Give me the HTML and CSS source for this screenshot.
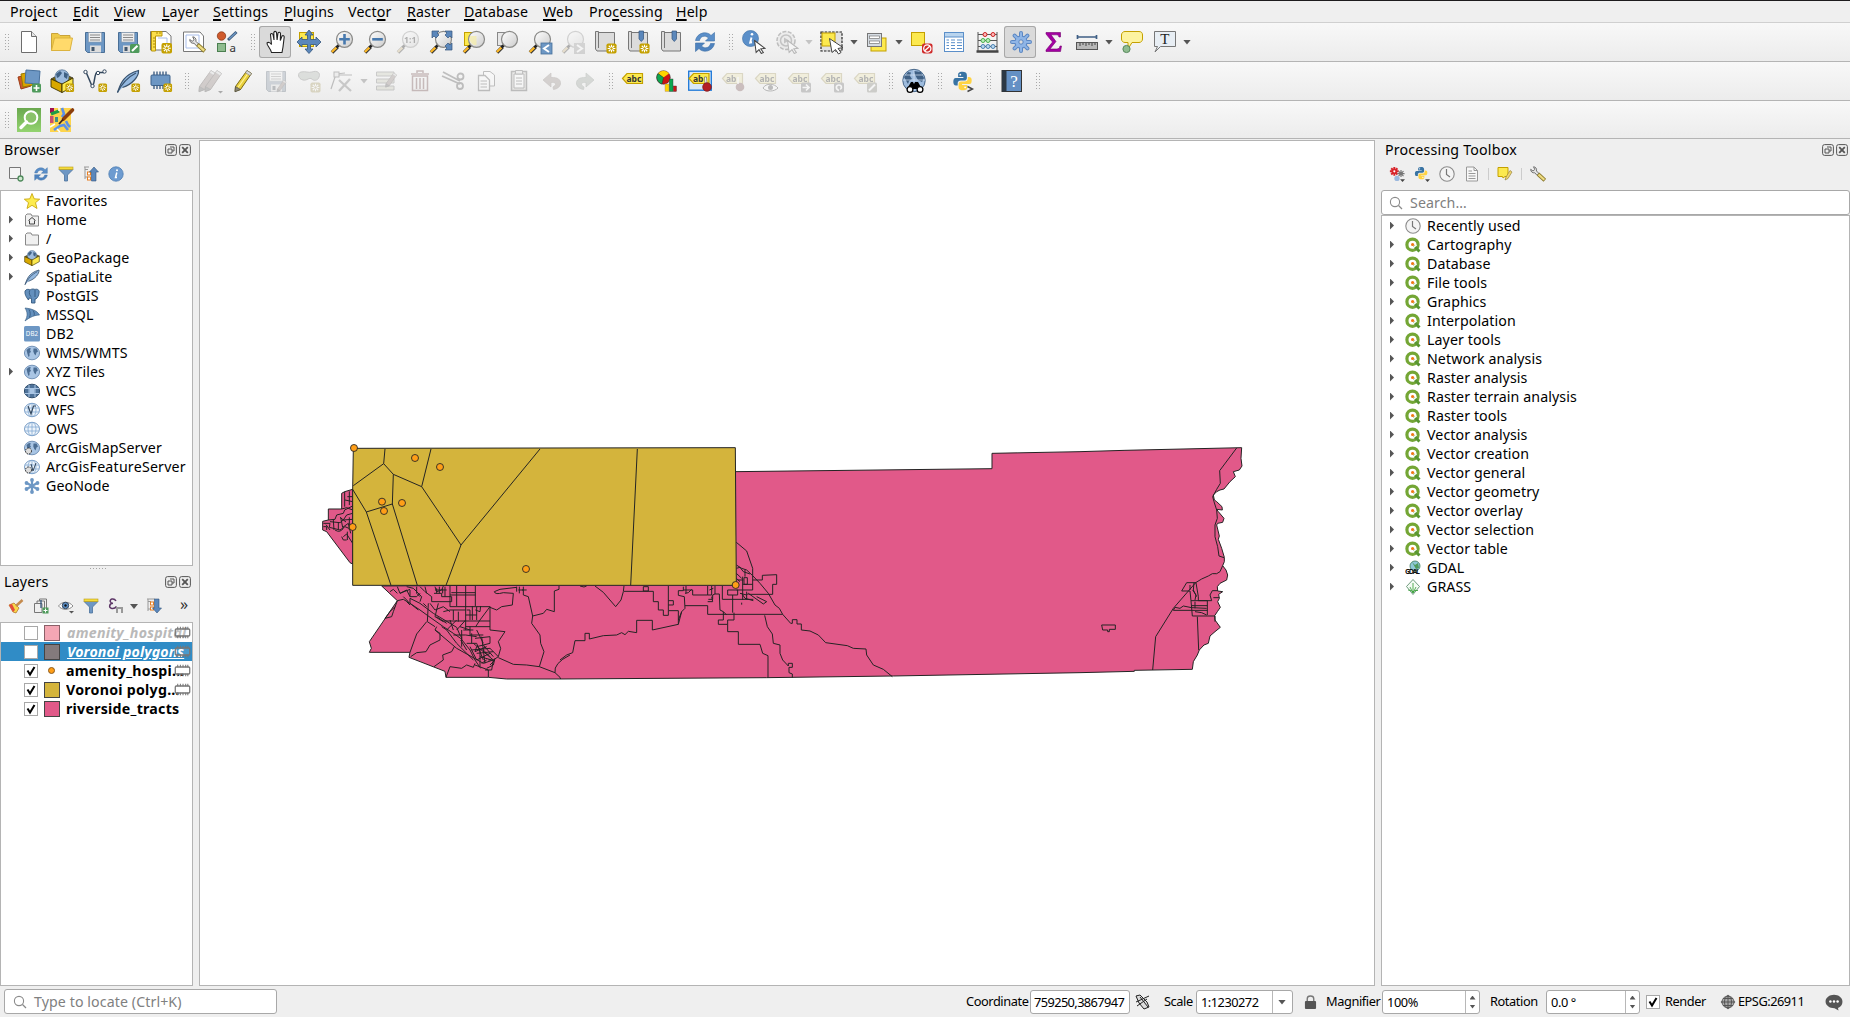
FILE: index.html
```html
<!DOCTYPE html>
<html lang="en">
<head>
<meta charset="utf-8">
<title>QGIS</title>
<link rel="stylesheet" href="styles.css">
</head>
<body>
<svg class="defs" width="0" height="0">
  <defs>
    <linearGradient id="lens" x1="0" y1="0" x2="1" y2="1"><stop offset="0" stop-color="#fff"/><stop offset="1" stop-color="#ccc"/></linearGradient>
    <linearGradient id="greenbox" x1="0" y1="0" x2="0" y2="1"><stop offset="0" stop-color="#6aa84f"/><stop offset="1" stop-color="#93d36f"/></linearGradient>
    <symbol id="new" viewBox="0 0 12 12"><rect x=".5" y=".5" width="11" height="11" rx="2" fill="#c4a000"/><path d="M6 1.8V10.2M1.8 6H10.2M3 3L9 9M9 3L3 9" stroke="#fff" stroke-width="1.2"/><circle cx="6" cy="6" r="1.3" fill="#c4a000"/></symbol>
    <symbol id="glass" viewBox="0 0 24 24"><path d="M2 22.500L7.500 17" stroke="#333" stroke-width="3.600"/><path d="M1.800 22L6.500 17.500" stroke="#fcb827" stroke-width="2.400"/><path d="M6.500 17.500L9.500 14.500" stroke="#222" stroke-width="2.600"/><circle cx="14.500" cy="9.300" r="8" fill="url(#lens)" stroke="#8a8a88" stroke-width="1.200"/></symbol>
    <symbol id="floppy" viewBox="0 0 24 24"><path d="M2.500 2.500H21.500V22.500H4.500L2.500 20.500Z" fill="#6d97c4" stroke="#4a6f96" stroke-width="1"/><rect x="5.500" y="2.500" width="13" height="9.500" fill="#eee" stroke="#8a9aac" stroke-width=".6"/><path d="M7 5H17M7 7.500H17M7 10H17" stroke="#888" stroke-width="1"/><rect x="7" y="15.500" width="11" height="7" fill="#ddd"/><rect x="8.500" y="17" width="3" height="4" fill="#41566c"/></symbol>
    <symbol id="reload" viewBox="0 0 24 24"><path d="M2.500 10.500C4 2.500 14 .5 18 5.500L21.500 2.500V11H12.500L15.500 8C12 4.500 7 6.500 6.500 10.500Z" fill="#5b8fc9" stroke="#3c6ea5" stroke-width=".6"/><path d="M21.500 13.500C20 21.500 10 23.500 6 18.500L2.500 21.500V13H11.500L8.500 16C12 19.500 17 17.500 17.500 13.500Z" fill="#4f83bf" stroke="#3c6ea5" stroke-width=".6"/></symbol>
    <symbol id="globe" viewBox="0 0 16 16"><ellipse cx="8" cy="8" rx="7.600" ry="6.800" fill="#a9c5e4" stroke="#5c7fa8" stroke-width=".8"/><path d="M2.500 5L5 3 7 3.500 6 5 7 7 5.500 8 5.500 11 4.500 12 3.500 9Z M9.500 3.500L12.500 3.500 14 6.500 12.500 7.500 11.500 10.500 10.300 9 9.300 6.500Z" fill="#4b6d93"/></symbol>
    <symbol id="grid" viewBox="0 0 16 16"><ellipse cx="8" cy="8" rx="7.500" ry="6.700" fill="#edf4fb" stroke="#6c93c0" stroke-width=".9"/><path d="M1 6H15M1 10H15M8 1.300V14.700" stroke="#83a9d3" stroke-width=".8"/><ellipse cx="8" cy="8" rx="4" ry="6.700" fill="none" stroke="#83a9d3" stroke-width=".8"/></symbol>
    <symbol id="package" viewBox="0 0 24 24"><path d="M1 10L12 4 23 9 12 15Z" fill="#7a6500" stroke="#333" stroke-width=".8"/><circle cx="12" cy="7.800" r="7" fill="#9dbbdd" stroke="#49688a" stroke-width=".7"/><path d="M6 5L10 2 12 4 9 8 7 9ZM14 3L18 5 17 10 14 8Z" fill="#3f6084"/><path d="M1 10L12 15V23.500L1 18Z" fill="#d8a800" stroke="#3c3200" stroke-width=".9"/><path d="M23 9L12 15V23.500L23 17.500Z" fill="#fce94f" stroke="#3c3200" stroke-width=".9"/></symbol>
    <symbol id="feather" viewBox="0 0 24 24"><path d="M1.500 23.500C4 17 6 6 22.500 1.500 23 7 17 15 6.500 18.500" fill="#93b8e0" stroke="#39536f" stroke-width="1.200"/><path d="M1.500 23.500C6 14 12 8 20 4" fill="none" stroke="#39536f" stroke-width="1.200"/></symbol>
    <symbol id="python" viewBox="0 0 24 24"><path d="M12 1.500C8 1.500 7 3 7 5V7.500H13V8.500H4.500C2 8.500 1.500 11 1.500 13S2.500 17 4.500 17H6.500V14.500C6.500 12.500 8 11.500 10 11.500H14C16 11.500 17 10 17 8.500V5C17 2.500 15 1.500 12 1.500Z" fill="#3873a3"/><circle cx="9.500" cy="4.800" r="1" fill="#fff"/><path d="M12.500 22.500C16.500 22.500 17.500 21 17.500 19V16.500H11.500V15.500H20C22 15.500 22.500 13 22.500 11S21.500 7.500 19.500 7.500H18V9.500C18 11.500 16.500 12.500 14.500 12.500H10.500C8.500 12.500 7.500 14 7.500 15.500V19C7.500 21.500 9.500 22.500 12.500 22.500Z" fill="#ffd343"/><circle cx="15" cy="19.200" r="1" fill="#fff"/></symbol>
    <symbol id="tag" viewBox="0 0 24 24"><path d="M1.500 9.500L6 4.500H21.500V14.500H6Z" fill="#fce94f" stroke="#c4a000" stroke-width="1.200"/></symbol>
    <symbol id="pencil" viewBox="0 0 24 24"><path d="M4.500 17.500L16 1.500 20.500 4.500 9.500 20.500 4 22.500Z" fill="#e9d03b" stroke="#7b6a16" stroke-width="1"/><path d="M7 18.500L18 3" stroke="#fff29a" stroke-width="1.200"/><path d="M16 1.500L20.500 4.500 19 6.700 14.500 3.700Z" fill="#d9d9d9" stroke="#777" stroke-width=".6"/><path d="M4.500 17.500L9.500 20.500 4 22.800Z" fill="#8b8775" stroke="#444" stroke-width=".6"/></symbol>
    <symbol id="dullpencil" viewBox="0 0 24 24"><path d="M4.500 17.500L16 1.500 20.500 4.500 9.500 20.500 4 22.500Z" fill="#a87f74" stroke="#6b5048" stroke-width="1"/><path d="M16 1.500L20.500 4.500 19 6.700 14.500 3.700Z" fill="#d9d9d9" stroke="#777" stroke-width=".6"/><path d="M4.500 17.500L9.500 20.500 4 22.800Z" fill="#666" stroke="#444" stroke-width=".6"/></symbol>
    <symbol id="cursor" viewBox="0 0 12 14"><path d="M1 1L11 8.500 7 9 9.500 12.500 7.500 13.500 5.300 9.800 2.500 12.500Z" fill="#fff" stroke="#444" stroke-width="1"/></symbol>
    <symbol id="q" viewBox="0 0 16 16"><circle cx="7.500" cy="7.700" r="5.600" fill="#fff" stroke="#74a635" stroke-width="3.200"/><path d="M9 9L14.500 14.500" stroke="#589632" stroke-width="3"/><path d="M8 11L11.500 8" stroke="#fff" stroke-width="1.300"/><circle cx="7.600" cy="7.500" r="1.600" fill="#ee7913"/></symbol>
    <symbol id="clock" viewBox="0 0 16 16"><circle cx="8" cy="8" r="7.200" fill="#f4f4f4" stroke="#8c8c8c" stroke-width="1.100"/><path d="M7.500 3V8.500L11 11" fill="none" stroke="#777" stroke-width="1.200"/></symbol>
    <symbol id="funnel" viewBox="0 0 16 16"><path d="M1 3.500L6.500 9V15H9.500V9L15 3.500Z" fill="#6e97c4" stroke="#49719d" stroke-width=".8"/><rect x="1" y="1" width="14" height="2.600" fill="#f5dc3c" stroke="#b89b15" stroke-width=".6"/></symbol>
    <symbol id="float" viewBox="0 0 12 12"><rect x=".6" y=".6" width="10.800" height="10.800" rx="2" fill="#eee" stroke="#555"/><path d="M5 3H9V7H7M3 5H7V9H3Z" fill="none" stroke="#555"/></symbol>
    <symbol id="close" viewBox="0 0 12 12"><rect x=".6" y=".6" width="10.800" height="10.800" rx="2" fill="#eee" stroke="#555"/><path d="M3.200 3.200L8.800 8.800M8.800 3.200L3.200 8.800" stroke="#555" stroke-width="1.800"/></symbol>
    <symbol id="mem" viewBox="0 0 16 12"><rect x="1.200" y="2.700" width="13.600" height="6.600" rx="1" fill="#fff" fill-opacity=".12" stroke="#777" stroke-width="1.200"/><path d="M3.500 .5V3M6 .5V3M8.500 .5V3M11 .5V3M13 .5V3M3.500 9V11.500M6 9V11.500M8.500 9V11.500M11 9V11.500M13 9V11.500" stroke="#777" stroke-width="1"/></symbol>
    <symbol id="find" viewBox="0 0 14 14"><circle cx="6" cy="6" r="4.600" fill="none" stroke="#8a8a8a" stroke-width="1.100"/><path d="M9.500 9.500L13 13" stroke="#8a8a8a" stroke-width="1.200"/></symbol>
    <symbol id="folder" viewBox="0 0 16 16"><path d="M1.500 3.500L3 2H7L8 4H14.500V14H1.500Z" fill="#f0f0f0" stroke="#888"/></symbol>
    <symbol id="wrench" viewBox="0 0 16 16"><path d="M3.500 .8C5.500 .8 7 2.500 6.500 5L9 7.500 7 9.300 4.800 6.800C2.500 7.300 .5 5.500 .7 3.300L3 5 4.800 3.500Z" fill="#e4e4e4" stroke="#666" stroke-width=".9"/><path d="M8 8L14.800 14.300" stroke="#8b7a2c" stroke-width="3.800"/><path d="M8.500 8.500L14.300 13.800" stroke="#eedc82" stroke-width="2.200"/></symbol>
  </defs>
</svg>

<nav class="menubar">
  <span class="m1">Pro<u>j</u>ect</span><span class="m2"><u>E</u>dit</span><span class="m3"><u>V</u>iew</span><span class="m4"><u>L</u>ayer</span><span class="m5"><u>S</u>ettings</span><span class="m6"><u>P</u>lugins</span><span class="m7">Vect<u>o</u>r</span><span class="m8"><u>R</u>aster</span><span class="m9"><u>D</u>atabase</span><span class="m10"><u>W</u>eb</span><span class="m11">Pro<u>c</u>essing</span><span class="m12"><u>H</u>elp</span>
</nav>

<div class="toolbar">
  <i class="grip first"></i>
  <b class="tool"><svg viewBox="0 0 24 24"><path d="M4.500 1.500H14.500L19.500 6.500V22.500H4.500Z" fill="#fff" stroke="#6d6d6d"/><path d="M14.500 1.500V6.500H19.500" fill="#e4e4e4" stroke="#6d6d6d"/></svg></b>
  <b class="tool"><svg viewBox="0 0 24 24"><path d="M1.500 20.500V3.500H8L10 5.500H20V8" fill="#eec947" stroke="#c9a33a"/><path d="M1.500 20.500L4.500 8H22.500L20 20.500Z" fill="#ffda6b" stroke="#dcb33e"/></svg></b>
  <b class="tool"><svg><use href="#floppy"/></svg></b>
  <b class="tool"><svg viewBox="0 0 24 24"><use href="#floppy"/><rect x="14" y="14" width="9.500" height="9" rx="1.500" fill="#4e9a5b"/><path d="M16 21L21.500 15.800" stroke="#fff" stroke-width="2"/></svg></b>
  <b class="tool"><svg viewBox="0 0 24 24"><path d="M1.500 1.500H17L22 6V20H1.500Z" fill="#fff" stroke="#777"/><path d="M9 8H18V16" fill="none" stroke="#a8bdea"/><path d="M2.500 1.500H13V6H6.500V21H2.500Z" fill="#fcdf4a" stroke="#b8960c"/><path d="M4 8H6M4 11H6M4 14H6M4 17H6M8 2V4M11 2V4" stroke="#a88a10"/><use href="#new" x="12" y="12.500" width="11.500" height="11.500"/></svg></b>
  <b class="tool"><svg viewBox="0 0 24 24"><path d="M1.500 2H18L21.500 6V21.500H1.500Z" fill="#fff" stroke="#777"/><path d="M4 5H17V18H4Z" fill="none" stroke="#a8bdea"/><use href="#wrench" x="7" y="6" width="17" height="17"/></svg></b>
  <b class="tool"><svg viewBox="0 0 24 24"><circle cx="6.500" cy="6" r="4.200" fill="#cf5a2c" stroke="#8e3a19" stroke-width=".8"/><path d="M13 10L21.500 2" stroke="#3a5878" stroke-width="3"/><path d="M14 9L21 2.500" stroke="#6d97c4" stroke-width="1.400"/><rect x="2.500" y="13.500" width="8" height="8" fill="#8fbc8f" stroke="#4b7f50"/><text x="14.500" y="22" font-family="Noto Sans" font-weight="normal" font-size="11.500" fill="#333">a</text></svg></b>
  <i class="grip"></i>
  <b class="tool on"><svg viewBox="0 0 24 24"><path d="M7.500 22.500C6.500 18 2.500 15 3 13 4.500 11.500 6.500 13 7.500 14.500L6.500 4.500C7 3 8.500 3.200 9 4.500L10 10 9.800 2.500C10.500 1 12 1 12.500 2.500L13.100 10 14 3C14.800 1.800 16.200 2.200 16.500 3.500L16.300 10.500 18 6C19 5 20.300 5.700 20.200 7L19 17 18 22.500Z" fill="#fff" stroke="#222" stroke-width="1.100"/></svg></b>
  <b class="tool"><svg viewBox="0 0 24 24"><rect x="2.500" y="2.500" width="14" height="14" fill="#fce94f" stroke="#c4a000"/><path d="M12 0L16 5H13.500V9.500H19V7L24 12 19 17V14.500H13.500V19H16L12 23.500 8 19H10.500V14.500H5V17L0 12 5 7V9.500H10.500V5H8Z" fill="#5b87bb" stroke="#33557c" stroke-width=".8"/></svg></b>
  <b class="tool"><svg viewBox="0 0 24 24"><use href="#glass"/><path d="M14.500 4V14.600M9.200 9.300H19.800" stroke="#4779ae" stroke-width="2.600"/></svg></b>
  <b class="tool"><svg viewBox="0 0 24 24"><use href="#glass"/><path d="M9.200 9.300H19.800" stroke="#4779ae" stroke-width="2.600"/></svg></b>
  <b class="tool off"><svg viewBox="0 0 24 24"><use href="#glass"/><text x="8" y="12.500" font-family="Noto Sans" font-weight="bold" font-size="8.500" fill="#222">1:1</text></svg></b>
  <b class="tool"><svg viewBox="0 0 24 24"><use href="#glass"/><path d="M3 1H10L8 3 10 5 7 8 5 6 3 8ZM23 1V8L21 6 19 8 16 5 18 3 16 1ZM23 20V13L21 15 19 13 16 16 18 18 16 20Z" fill="#5b87bb" stroke="#33557c" stroke-width=".7"/></svg></b>
  <b class="tool"><svg viewBox="0 0 24 24"><rect x="2.500" y="2.500" width="13" height="13" fill="#fce94f" stroke="#c4a000"/><use href="#glass"/><path d="M8 6H14.500V15H12C8 13 7 10 8 6Z" fill="#f4ecae" opacity=".8"/></svg></b>
  <b class="tool"><svg viewBox="0 0 24 24"><rect x="2.500" y="2.500" width="13" height="13" fill="#e8e8e8" stroke="#888"/><use href="#glass"/></svg></b>
  <b class="tool"><svg viewBox="0 0 24 24"><use href="#glass"/><rect x="13" y="13" width="11" height="11" fill="#6d97c4" stroke="#47709c" stroke-width=".8"/><path d="M21 15L16 18.500 21 22" fill="none" stroke="#fff" stroke-width="2"/></svg></b>
  <b class="tool off"><svg viewBox="0 0 24 24"><use href="#glass"/><rect x="13" y="13" width="11" height="11" fill="#999"/><path d="M16 15L21 18.500 16 22" fill="none" stroke="#fff" stroke-width="2"/></svg></b>
  <b class="tool"><svg viewBox="0 0 24 24"><path d="M4.500 2.500H20.500V21H3L1.500 19V1.500H4.500V18" fill="#dcdcdc" stroke="#777"/><use href="#new" x="12" y="13" width="11" height="11"/></svg></b>
  <b class="tool"><svg viewBox="0 0 24 24"><path d="M4.500 2.500H20.500V21H3L1.500 19V1.500H4.500V18" fill="#dcdcdc" stroke="#777"/><path d="M12 1H16.500V9L14.300 11.500 12 9Z" fill="#5b87bb" stroke="#33557c" stroke-width=".7"/><use href="#new" x="12" y="13" width="11" height="11"/></svg></b>
  <b class="tool"><svg viewBox="0 0 24 24"><path d="M4.500 2.500H20.500V21H3L1.500 19V1.500H4.500V18" fill="#dcdcdc" stroke="#777"/><path d="M12 1H16.500V9L14.300 11.500 12 9Z" fill="#5b87bb" stroke="#33557c" stroke-width=".7"/></svg></b>
  <b class="tool"><svg><use href="#reload"/></svg></b>
  <i class="grip"></i>
  <b class="tool"><svg viewBox="0 0 24 24"><circle cx="8.500" cy="8.500" r="8" fill="#5b8fc9" stroke="#4375ab" stroke-width=".7"/><path d="M9.500 7.500L8.200 12.500 10 12.200" fill="none" stroke="#fff" stroke-width="1.900"/><circle cx="10" cy="4.200" r="1.300" fill="#fff"/><use href="#cursor" x="11.500" y="9.500" width="12.500" height="14.500"/></svg></b>
  <b class="tool off"><svg viewBox="0 0 24 24"><circle cx="11" cy="10.500" r="9" fill="#ddd" stroke="#555" stroke-width="1.500" stroke-dasharray="4 1.500"/><circle cx="11" cy="10.500" r="5.500" fill="none" stroke="#666" stroke-width="1.500"/><path d="M9 7.500L14 10.500 9 13.500Z" fill="#666"/><use href="#cursor" x="11.500" y="9.500" width="12.500" height="14.500"/></svg></b><i class="drop off"></i>
  <b class="tool"><svg viewBox="0 0 24 24"><rect x="1" y="2" width="21" height="19" fill="#e2e2e2" stroke="#222" stroke-width="1.200" stroke-dasharray="2.500 1.200"/><rect x="2" y="3" width="13" height="13" fill="#fce94f" stroke="#c4a000"/><path d="M9.500 8.500L23 17.500 18 18.500 21 22.500 18.500 24 15.500 19.500 12 22.500Z" fill="#fff" stroke="#444"/></svg></b><i class="drop"></i>
  <b class="tool"><svg viewBox="0 0 24 24"><rect x="6" y="8" width="15" height="13" fill="#fce94f" stroke="#c4a000"/><rect x="2.500" y="3.500" width="14" height="13" fill="#d5dce3" stroke="#777"/><rect x="4.500" y="6" width="10" height="2.500" fill="#fff" stroke="#777" stroke-width=".7"/><rect x="4.500" y="11" width="10" height="2.500" fill="#fff" stroke="#777" stroke-width=".7"/></svg></b><i class="drop"></i>
  <b class="tool"><svg viewBox="0 0 24 24"><rect x="1.500" y="2.500" width="13" height="13" fill="#fce94f" stroke="#c4a000"/><rect x="12" y="13.500" width="10.500" height="10" rx="2" fill="#cf2b2b"/><circle cx="17.300" cy="18.500" r="3.600" fill="none" stroke="#fff" stroke-width="1.300"/><path d="M14.500 21L20 16" stroke="#fff" stroke-width="1.300"/></svg></b>
  <b class="tool"><svg viewBox="0 0 24 24"><rect x="1.500" y="2.500" width="19" height="19" fill="#fff" stroke="#5b8fc9"/><path d="M1.500 2.500H20.500V7H1.500Z" fill="#b9d4ee" stroke="#5b8fc9"/><path d="M3.500 10H6M8 10H12M14 10H19M3.500 12.700H6M8 12.700H12M14 12.700H19M3.500 15.500H6M8 15.500H12M14 15.500H19M3.500 18.500H6M8 18.500H12M14 18.500H19" stroke="#5b8fc9"/></svg></b>
  <b class="tool"><svg viewBox="0 0 24 24"><path d="M2 2V21M21 2V21M2 4.500H21M2 10.500H21M2 16.500H21" stroke="#555" fill="none"/><g fill="#ffb8b8" stroke="#cc2020"><circle cx="9" cy="4.500" r="2"/><circle cx="17" cy="4.500" r="2"/></g><g fill="#b8f0b8" stroke="#4caf50"><circle cx="7" cy="10.500" r="2"/><circle cx="12" cy="10.500" r="2"/></g><g fill="#b8d8f0" stroke="#4a80b0"><circle cx="7" cy="16.500" r="2"/><circle cx="12" cy="16.500" r="2"/><circle cx="17" cy="16.500" r="2"/></g><path d="M.5 21.500H22.500" stroke="#444" stroke-width="2.500"/></svg></b>
  <b class="tool on"><svg viewBox="0 0 24 24"><g stroke="#5b87c3" stroke-width="4" stroke-linecap="round"><path d="M12 3V21M3 12H21M5.600 5.600L18.400 18.400M18.400 5.600L5.600 18.400"/></g><circle cx="12" cy="12" r="6.600" fill="#5b87c3"/><g stroke="#8fb5e6" stroke-width="2" stroke-linecap="round"><path d="M12 3V21M3 12H21M5.600 5.600L18.400 18.400M18.400 5.600L5.600 18.400"/></g><circle cx="12" cy="12" r="5.600" fill="#8fb5e6"/><circle cx="12" cy="12" r="2.200" fill="#dcdcdc" stroke="#5b87c3"/></svg></b>
  <b class="tool"><svg viewBox="0 0 24 24"><path d="M4 2.500H18.500V7H17C16.500 5 15.500 4.800 13.500 4.800H9L14 11.500 8 19H14.500C17 19 17.500 18 18 16H19.500L18.500 21.500H4V20L10.500 12 4 4Z" fill="#a300a3" stroke="#75006f" stroke-width=".6"/></svg></b>
  <b class="tool"><svg viewBox="0 0 24 24"><path d="M2.500 7H21.500M2.500 5V9M21.500 5V9" stroke="#3f5f85" stroke-width="1.700"/><rect x="1.500" y="12.500" width="21" height="7" fill="#b8b8b8" stroke="#555"/><path d="M5 13V16M8 13V15M11 13V16M14 13V15M17 13V16M20 13V15" stroke="#444"/></svg></b><i class="drop"></i>
  <b class="tool"><svg viewBox="0 0 24 24"><path d="M5 1.500H19C21.500 1.500 22.500 3 22.500 5V9C22.500 11 21 12.500 19 12.500H12L8 19V12.500H5C3 12.500 1.500 11 1.500 9V5C1.500 3 3 1.500 5 1.500Z" fill="#fdf3a0" stroke="#c4a000"/><circle cx="6.500" cy="19" r="3.600" fill="#8fbc8f" stroke="#57885c"/></svg></b>
  <b class="tool"><svg viewBox="0 0 24 24"><path d="M1.500 1.500H22.500V16.500H7.500L2 22 4.500 16.500H1.500Z" fill="#e8eef4" stroke="#777"/><text x="12" y="14" text-anchor="middle" font-family="Liberation Serif" font-weight="normal" font-size="15" fill="#222">T</text></svg></b><i class="drop"></i>
</div>

<div class="toolbar">
  <i class="grip first"></i>
  <b class="tool"><svg viewBox="0 0 24 24"><path d="M1 8L10 6 14 17 4 20Z" fill="#cf5a2c" stroke="#9c3d17"/><path d="M4 5L14 3 16 16 6 18Z" fill="#d9a400" stroke="#9b7a00"/><path d="M9 1L23 2 22 15 8 14Z" fill="#6d97c4" stroke="#47709c"/><rect x="15" y="14.500" width="9" height="9" rx="1.500" fill="#4e9a5b"/><path d="M19.500 16V22M16.500 19H22.500" stroke="#fff" stroke-width="1.600"/></svg></b>
  <b class="tool"><svg viewBox="0 0 24 24"><use href="#package"/><use href="#new" x="15" y="14" width="9.500" height="9.500"/></svg></b>
  <b class="tool"><svg viewBox="0 0 24 24"><path d="M3 3L9 17C12 17 11 4 14 3.500H21" fill="none" stroke="#33475d" stroke-width="1.500"/><g fill="#fff" stroke="#33475d"><circle cx="2.500" cy="3" r="1.700"/><circle cx="9.500" cy="17" r="1.700"/><circle cx="15" cy="4" r="1.700"/><circle cx="21.500" cy="2.500" r="1.700"/></g><use href="#new" x="15" y="14" width="9.500" height="9.500"/></svg></b>
  <b class="tool"><svg viewBox="0 0 24 24"><use href="#feather"/><use href="#new" x="15" y="14" width="9.500" height="9.500"/></svg></b>
  <b class="tool"><svg viewBox="0 0 24 24"><path d="M5 2.500V20M8 2.500V20M11 2.500V20M14 2.500V20M17 2.500V20" stroke="#33557c" stroke-width="1.300"/><rect x="2" y="6" width="19" height="10.500" rx="1.200" fill="#6d97c4" stroke="#3c618a"/><use href="#new" x="14" y="14" width="9.500" height="9.500"/></svg></b>
  <i class="grip"></i>
  <b class="tool off"><svg viewBox="0 0 24 24"><use href="#dullpencil" x="-3"/><use href="#dullpencil" x="3"/><path d="M20 22H25L22.500 24.500Z" fill="#222"/></svg></b>
  <b class="tool"><svg><use href="#pencil"/></svg></b>
  <b class="tool off"><svg viewBox="0 0 24 24"><use href="#floppy"/><use href="#dullpencil" x="11" y="10" width="13" height="14"/></svg></b>
  <b class="tool off"><svg viewBox="0 0 24 24"><path d="M4 3C9 2 11 4 15 3 20 1 24 4 22 8 21 12 16 12 15 10 12 8 10 12 6 11 1 10 0 4 4 3Z" fill="#a3b8a0" stroke="#777"/><use href="#new" x="13" y="13" width="11" height="11"/></svg></b>
  <b class="tool off"><svg viewBox="0 0 24 24"><path d="M1 20L6 5L15 4M22 6L5 6" fill="none" stroke="#555" stroke-width="1.200"/><rect x="4" y="3" width="5" height="5" fill="#ddd" stroke="#555"/><path d="M9 11L21 22M20 10L9 22" stroke="#777" stroke-width="2.300"/></svg></b><i class="drop off"></i>
  <b class="tool off"><svg viewBox="0 0 24 24"><path d="M1.500 3H19V7H1.500ZM1.500 10H19V14H1.500ZM1.500 17H19V21H1.500Z" fill="#c9cd9a" stroke="#777"/><use href="#dullpencil" x="8" width="16" height="22"/></svg></b>
  <b class="tool off"><svg viewBox="0 0 24 24"><path d="M4.500 7H19.500V21.500H4.500ZM3 5H21M9 4V2H15V4M8.500 9V20M12 9V20M15.500 9V20" fill="none" stroke="#a83e3e" stroke-width="1.500"/></svg></b>
  <b class="tool off"><svg viewBox="0 0 24 24"><path d="M1 7L19 15M2 3L19 12" stroke="#555" stroke-width="1.800"/><circle cx="19.500" cy="7.500" r="3" fill="none" stroke="#555" stroke-width="1.800"/><circle cx="19" cy="17" r="3" fill="none" stroke="#555" stroke-width="1.800"/></svg></b>
  <b class="tool off"><svg viewBox="0 0 24 24"><path d="M9.500 2.500H16L20.500 6V17H9.500Z" fill="#fff" stroke="#555"/><path d="M4.500 6.500H11L15.500 11V21.500H4.500Z" fill="#fff" stroke="#555" stroke-width="1.300"/><path d="M6.500 12H13M6.500 15H13M6.500 18H13" stroke="#555"/></svg></b>
  <b class="tool off"><svg viewBox="0 0 24 24"><path d="M4.500 2.500H19.500V21.500H4.500Z" fill="#d8d2c4" stroke="#555" stroke-width="1.500"/><path d="M7 5H17V19H7Z" fill="#fff" stroke="#555"/><path d="M8.500 1.500H15.500V5H8.500Z" fill="#ddd" stroke="#555"/><path d="M9 9H15M9 12H15M9 15H15" stroke="#555"/></svg></b>
  <b class="tool off"><svg viewBox="0 0 24 24"><path d="M3 11L11 4V8.500C18 8 21 11 20.500 15 20 18 17 20 13.500 20.500L13 18C18 15 15 13 11 13.500V18Z" fill="#a88a7d" stroke="#8a6f62" stroke-width=".7"/></svg></b>
  <b class="tool off"><svg viewBox="0 0 24 24"><path d="M21 11L13 4V8.500C6 8 3 11 3.500 15 4 18 7 20 10.500 20.500L11 18C6 15 9 13 13 13.500V18Z" fill="#94a894" stroke="#6f8a74" stroke-width=".7"/></svg></b>
  <i class="grip"></i>
  <b class="tool"><svg viewBox="0 0 24 24"><use href="#tag" x="-1"/><text x="4.500" y="12.500" class="abc">abc</text></svg></b>
  <b class="tool"><svg viewBox="0 0 24 24"><circle cx="8.500" cy="8.500" r="6.800" fill="#cc1414" stroke="#222" stroke-width=".5"/><path d="M8.500 8.500L3 4.500A6.800 6.800 0 0 1 14 4.500Z" fill="#fdd400"/><path d="M8.500 8.500L3 4.500A6.800 6.800 0 0 0 7 15Z" fill="#0da750" stroke="#222" stroke-width=".4"/><rect x="10" y="15" width="4" height="7.500" fill="#fdd400" stroke="#a88" stroke-width=".4"/><rect x="14.300" y="10" width="3.700" height="12.500" fill="#0da750" stroke="#333" stroke-width=".4"/><rect x="18.300" y="17" width="3.200" height="5.500" fill="#cc1414" stroke="#333" stroke-width=".4"/></svg></b>
  <b class="tool"><svg viewBox="0 0 24 24"><rect x=".7" y="2.200" width="22.600" height="19" fill="#d9e8f8" stroke="#1b76d8" stroke-width="1.300"/><use href="#tag" x="-.5"/><text x="5" y="12.500" class="abc">ab</text><path d="M16.500 8L18.500 8 19 15H17Z" fill="#fff" stroke="#555" stroke-width=".6"/><circle cx="19" cy="18" r="4.300" fill="#b31f24" stroke="#7a1216" stroke-width=".7"/></svg></b>
  <b class="tool off"><svg viewBox="0 0 24 24"><use href="#tag"/><text x="5" y="12.500" class="abc">ab</text><circle cx="19" cy="18" r="4.300" fill="#b54b4b"/><path d="M17 8V15" stroke="#fff" stroke-width="1.500"/></svg></b>
  <b class="tool off"><svg viewBox="0 0 24 24"><use href="#tag"/><text x="5.500" y="12.500" class="abc">abc</text><path d="M9 19C12 14 20 14 24 19 20 23 12 23 9 19Z" fill="#fff" stroke="#444"/><circle cx="16.500" cy="18.500" r="2.500" fill="#555"/></svg></b>
  <b class="tool off"><svg viewBox="0 0 24 24"><use href="#tag"/><text x="5.500" y="12.500" class="abc">abc</text><rect x="14" y="13.500" width="10" height="10" rx="1.500" fill="#777"/><path d="M15.500 18.500H21M19 15.500L22 18.500 19 21.500" fill="none" stroke="#fff" stroke-width="1.700"/></svg></b>
  <b class="tool off"><svg viewBox="0 0 24 24"><use href="#tag"/><text x="5.500" y="12.500" class="abc">abc</text><rect x="14" y="13.500" width="10" height="10" rx="1.500" fill="#777"/><path d="M19 21.500C15 20 16 16 19 16S22 20 20 20" fill="none" stroke="#fff" stroke-width="1.700"/></svg></b>
  <b class="tool off"><svg viewBox="0 0 24 24"><use href="#tag"/><text x="5.500" y="12.500" class="abc">abc</text><rect x="14" y="13.500" width="10" height="10" rx="1.500" fill="#8a8a6a"/><path d="M16 21.500L22 15.500" stroke="#fff" stroke-width="2"/></svg></b>
  <i class="grip"></i>
  <b class="tool"><svg viewBox="0 0 24 24"><circle cx="12" cy="11.500" r="11.200" fill="#9dbbdd" stroke="#49688a"/><path d="M2 8L6 3 9 3.500 8 7 10 10 7 12 6 15ZM12 2L19 3 22 9 20 13 16 11 13 6Z" fill="#3f6084"/><path d="M1 11H23M12 1V22M3 6H21" stroke="#d6e4f3" stroke-width=".7"/><path d="M5 20L9 13H11L12 15 13 13H16L20 20Z" fill="#000"/><circle cx="8" cy="20.500" r="2.900" fill="#fff" stroke="#000" stroke-width="1.300"/><circle cx="18" cy="20.500" r="2.900" fill="#fff" stroke="#000" stroke-width="1.300"/></svg></b>
  <i class="grip"></i>
  <b class="tool"><svg viewBox="0 0 24 24"><use href="#python" x="1" y="1" width="21" height="22"/><path d="M16.500 17.500L21.500 20 16.500 22.500" fill="none" stroke="#444" stroke-width="1.400"/></svg></b>
  <i class="grip"></i>
  <b class="tool"><svg viewBox="0 0 24 24"><rect x="2" y="1.500" width="19.500" height="21" fill="#6490c4" stroke="#333"/><rect x="2" y="1.500" width="4.500" height="21" fill="#2c3844"/><text x="14" y="17.500" text-anchor="middle" font-family="Liberation Serif" font-weight="normal" font-size="17" fill="#fff">?</text></svg></b>
  <i class="grip"></i>
</div>

<div class="toolbar last">
  <i class="grip first"></i>
  <b class="tool"><svg viewBox="0 0 24 24"><rect width="24" height="24" fill="url(#greenbox)"/><circle cx="14" cy="9.500" r="6.300" fill="#8ac26a" stroke="#fff" stroke-width="2"/><path d="M9.500 14L4 19.500" stroke="#fff" stroke-width="3.400" stroke-linecap="round"/></svg></b>
  <b class="tool"><svg viewBox="0 0 24 24"><rect width="21" height="24" fill="#fdd44c"/><path d="M0 0H4V5H0Z" fill="#a01050"/><path d="M1 6L9 3" stroke="#1e9c46" stroke-width="3"/><path d="M0 8H3.500V15H0Z" fill="#c9506f"/><path d="M5 9H8V14H5Z" fill="#3f8f86"/><path d="M12 0L14 6 12 9M16 13L18 17 20 19M4 22L10 18 14 17 18 22" fill="none" stroke="#5a90e8" stroke-width="2.600"/><path d="M0 19L5 16M7 21L10 24M9 0V3" stroke="#fff" stroke-width="1.500"/><path d="M13.500 11L22.500 2" stroke="#8b3e0c" stroke-width="3.600" stroke-linecap="round"/><path d="M9 16L13 11.500" fill="none" stroke="#322" stroke-width="1.800"/></svg></b>
</div>

<main class="main">
  <aside class="dock left">
    <div class="title"><span>Browser</span><svg><use href="#float"/></svg><svg><use href="#close"/></svg></div>
    <div class="mini">
      <svg viewBox="0 0 16 16"><path d="M1.500 1.500H12.500V12.500H1.500Z" fill="#f4f4f4" stroke="#777"/><circle cx="12.500" cy="12.500" r="2.500" fill="#cfe8cf" stroke="#4e8a5b" stroke-width="1.300"/></svg>
      <svg><use href="#reload"/></svg>
      <svg><use href="#funnel"/></svg>
      <svg viewBox="0 0 16 16"><path d="M2 1V13M2 3.500H5M2 11H5M1 1H6" fill="none" stroke="#999"/><rect x="4.500" y="6" width="3" height="3" fill="#fff" stroke="#e77e22"/><rect x="4.500" y="11" width="3" height="3" fill="#fff" stroke="#e77e22"/><path d="M8.500 15V6H6.500L11 1 15.500 6H13V15Z" fill="#5b87bb" stroke="#33557c" stroke-width=".6"/></svg>
      <svg viewBox="0 0 16 16"><circle cx="8" cy="8" r="7.200" fill="#6d9bd0" stroke="#4c7db3" stroke-width=".8"/><path d="M8.800 6.500L7.500 11.500H9" fill="none" stroke="#fff" stroke-width="1.500"/><circle cx="9" cy="4.300" r="1" fill="#fff"/></svg>
    </div>
    <div class="tree browser">
      <div class="row leaf"><svg viewBox="0 0 16 16"><path d="M8 .5L10.200 5.800 15.700 6.200 11.500 9.700 13 15.500 8 12.300 3 15.500 4.500 9.700 .3 6.200 5.800 5.800Z" fill="#fdec4e" stroke="#c4a000" stroke-width=".8"/></svg>Favorites</div>
      <div class="row"><svg viewBox="0 0 16 16"><use href="#folder"/><path d="M4.500 8.500L8 5.500 11.500 8.500M5.500 8.500V12H10.500V8.500" fill="none" stroke="#444"/></svg>Home</div>
      <div class="row"><svg><use href="#folder"/></svg>/</div>
      <div class="row"><svg><use href="#package"/></svg>GeoPackage</div>
      <div class="row"><svg><use href="#feather"/></svg>SpatiaLite</div>
      <div class="row leaf"><svg viewBox="0 0 16 16"><path d="M1 3C2 1 5 1 6 2 8 .5 10 1 11 1.500 13 .5 16 2 15 5 15 8 13 10 12 11H11V15H7.500V10.500L5 10 4.500 12C2 9 .5 6 1 3Z" fill="#6490bd" stroke="#345a80" stroke-width=".9"/><path d="M5.500 2.500C5 5 5.500 8 7.500 9M11 2V9" fill="none" stroke="#345a80" stroke-width=".9"/></svg>PostGIS</div>
      <div class="row leaf"><svg viewBox="0 0 16 16"><path d="M1 1C6 1.500 13 3 15.500 8 11 8 6 10 1 14 4 9 3.500 5 1 1Z" fill="#6490bd" stroke="#345a80" stroke-width=".6"/><path d="M5 2.500C6.500 5 6.500 8 5.500 10.500M9 3.500C10.500 5.500 10.500 7 10 8.500" fill="none" stroke="#35597f" stroke-width=".9"/></svg>MSSQL</div>
      <div class="row leaf"><svg viewBox="0 0 16 16"><rect width="16" height="15.500" rx="1.500" fill="#6d97c4"/><text x="8" y="10" text-anchor="middle" font-family="Noto Sans" font-size="6.200" fill="#fff">DB2</text></svg>DB2</div>
      <div class="row leaf"><svg><use href="#globe"/></svg>WMS/WMTS</div>
      <div class="row"><svg><use href="#globe"/></svg>XYZ Tiles</div>
      <div class="row leaf"><svg viewBox="0 0 16 16"><ellipse cx="8" cy="8" rx="7.600" ry="6.800" fill="#4e7299" stroke="#2f4d6c"/><path d="M1 5.500H15M1 10.500H15M5 2V14M11 2V14" stroke="#a9c5e4"/><rect x="5.500" y="6" width="5" height="4" fill="#a9c5e4"/></svg>WCS</div>
      <div class="row leaf"><svg viewBox="0 0 16 16"><use href="#grid"/><path d="M4 4L7 12 9.500 4H12" fill="none" stroke="#33475d" stroke-width="1.200"/></svg>WFS</div>
      <div class="row leaf"><svg><use href="#grid"/></svg>OWS</div>
      <div class="row leaf"><svg viewBox="0 0 16 16"><use href="#globe"/><circle cx="4.500" cy="11" r="3" fill="#ddd" stroke="#222" stroke-dasharray="1.500 1"/></svg>ArcGisMapServer</div>
      <div class="row leaf"><svg viewBox="0 0 16 16"><use href="#grid"/><path d="M7 5L9 12 12 4" fill="none" stroke="#33475d"/><circle cx="4.500" cy="11" r="3" fill="#ddd" stroke="#222" stroke-dasharray="1.500 1"/></svg><span class="wide">ArcGisFeatureServer</span></div>
      <div class="row leaf"><svg viewBox="0 0 16 16"><path d="M8 2V14M2.800 5L13.200 11M13.200 5L2.800 11" stroke="#6d97c4" stroke-width="2.200"/><g fill="#6d97c4"><circle cx="8" cy="2" r="1.900"/><circle cx="8" cy="14" r="1.900"/><circle cx="2.500" cy="5" r="1.900"/><circle cx="13.500" cy="11" r="1.900"/><circle cx="13.500" cy="5" r="1.900"/><circle cx="2.500" cy="11" r="1.900"/></g></svg>GeoNode</div>
    </div>
    <div class="splitter"></div>
    <div class="title"><span>Layers</span><svg><use href="#float"/></svg><svg><use href="#close"/></svg></div>
    <div class="mini">
      <svg viewBox="0 0 16 16"><path d="M1 7L6 5 11 10 8 15 5 14Z" fill="#f7d84a" stroke="#b06a20" stroke-width=".7"/><path d="M1 7L4 6 7 12 5 14Z" fill="#e44b3c"/><path d="M8 8L14.500 2" stroke="#c58b4e" stroke-width="2.600"/></svg>
      <svg viewBox="0 0 16 16"><path d="M1.500 5.500H9V14.500H1.500ZM4 5V3H11.500V12M6.500 3V1H13.500V10" fill="none" stroke="#777"/><path d="M8 2V10" stroke="#33557c" stroke-width="1.300"/><rect x="9.500" y="9.500" width="6" height="6" fill="#4e9a5b"/><path d="M12.500 10.500V14.500M10.500 12.500H14.500" stroke="#fff"/></svg>
      <svg viewBox="0 0 16 16"><path d="M.5 8C4 3 11 3 15 8 11 12.500 4 12.500 .5 8Z" fill="#fff" stroke="#888"/><circle cx="7.500" cy="7.500" r="3.200" fill="#5b8fc9" stroke="#345"/><circle cx="7.500" cy="7.500" r="1.200" fill="#111"/><path d="M11 13H16L13.500 15.500Z" fill="#555"/></svg>
      <svg><use href="#funnel"/></svg>
      <svg class="eps" viewBox="0 0 16 16"><path d="M8 3C6-.5 1 1 2.500 4 3 5 4 5.300 5 5.300 1 5.500 .5 10 4 10.500 6 10.700 7.500 10 8.500 8.500" fill="none" stroke="#5c3566" stroke-width="1.500"/><path d="M9 15V10H14V15" fill="none" stroke="#999" stroke-width="2"/></svg>
      <i class="drop"></i>
      <svg class="expand" viewBox="0 0 16 16"><path d="M2 1V13M2 3.500H5M2 11H5M1 1H9" fill="none" stroke="#999"/><rect x="4.500" y="4" width="3" height="3" fill="#fff" stroke="#e77e22"/><rect x="4.500" y="9" width="3" height="3" fill="#fff" stroke="#e77e22"/><path d="M8.500 1V10H6.500L11 15 15.500 10H13V1Z" fill="#5b87bb" stroke="#33557c" stroke-width=".6"/></svg>
      <span class="more">»</span>
    </div>
    <div class="tree layers">
      <div class="lrow hidden"><i class="check"></i><i class="swatch rose"></i><span>amenity_hospital</span><svg><use href="#mem"/></svg></div>
      <div class="lrow selected"><i class="check"></i><i class="swatch grey"></i><span>Voronoi polygons</span><svg><use href="#mem"/></svg></div>
      <div class="lrow"><i class="check"><svg viewBox="0 0 12 12"><path d="M2.500 5.500L5 9.500 9.500 2" fill="none" stroke="#000" stroke-width="2"/></svg></i><i class="dot"></i><span>amenity_hospi…</span><svg><use href="#mem"/></svg></div>
      <div class="lrow"><i class="check"><svg viewBox="0 0 12 12"><path d="M2.500 5.500L5 9.500 9.500 2" fill="none" stroke="#000" stroke-width="2"/></svg></i><i class="swatch gold"></i><span>Voronoi polyg…</span><svg><use href="#mem"/></svg></div>
      <div class="lrow"><i class="check"><svg viewBox="0 0 12 12"><path d="M2.500 5.500L5 9.500 9.500 2" fill="none" stroke="#000" stroke-width="2"/></svg></i><i class="swatch pink"></i><span>riverside_tracts</span></div>
    </div>
  </aside>

  <section class="canvas">
    <svg viewBox="0 0 1174 844" width="1174" height="844">
      <g transform="translate(110 289) scale(.333333)" stroke="#232323" stroke-width="3" fill="none" stroke-linejoin="round">
        <g fill="#e15989">
          <path d="M128 178L104 185 95 190V237H55V270L38 274V300L50 305 120 398 128 402Z"/>
          <path d="M215 468L262 512 178 635 184 655 178 667H300L297 682 405 724 408 742H535L590 747H750L1370 743 1750 738 2310 728 2473 724V721L2647 718 2650 695 2662 675 2668 660 2682 645 2695 640 2700 618 2715 605 2731 592 2715 570 2714 557 2722 545 2731 532 2723 515 2728 505 2726 493 2738 485 2723 483 2722 470 2730 460 2750 450 2753 435 2748 420 2738 407 2743 395 2743 382 2735 355 2725 328 2728 318 2720 285 2723 280 2738 277 2742 265 2725 245 2720 238 2737 240 2736 230 2720 215 2713 210 2710 195 2720 185 2730 180 2742 177 2760 155 2776 140 2770 125 2788 120 2796 108 2793 85 2795 53 2445 61 2310 65 2046 70V116L1275 125V460Z"/>
        </g>
        <path d="M55 270L75 268 80 255 100 250 104 240 128 228M60 275L90 278 100 270 128 268M40 280H60L58 292 90 300 105 290 128 300M70 270L72 300M85 278V298M100 320L110 312 128 340M95 237L110 233 128 240M104 185V230M112 200H128M118 184V225M95 320L100 330H110M100 270L110 255 128 250M92 262L98 292 115 280 122 310M48 284L60 300M75 300Q90 310 100 295M105 210L128 215M90 262L108 276M112 305V330M40 290H50V300M118 262V300"/>
        <!-- western tracts -->
        <path d="M262 512L280 508 300 520 330 540 352 556 400 590 430 610 452 625 480 660 495 690 512 715M300 505L330 520 370 550 440 592 452 620M300 505V520L325 540M262 470L270 490 290 480 300 500M240 485L250 478 262 490M290 470L310 475 335 500 330 515M270 490L300 478M330 470L345 485 365 500M375 470L380 485 395 480 400 468M372 490H395V500H425V515H365V500M405 470V500M420 468V530M440 468V528M467 468V600M496 468V528M420 495H496M420 530H540M424 488H496M400 545L420 540H467M360 520L375 540 400 530 420 545M385 520L375 560 400 575M355 520L352 575 375 590M470 540H480V570M487 528V570M500 530V570M496 540L510 545 512 528M400 573H540M440 600L467 570M467 590H540M430 615H467L500 620M455 600V630M480 590V615H520M455 620V650M485 610V640M540 530V600L585 605 565 635 572 655 565 680 550 690M540 530L510 570 497 590M410 600L440 640 490 690M380 590L375 600 440 655 520 700M375 600L390 610V630L360 645 348 665 320 668 302 680M350 575L320 612 300 667M262 512L250 545 245 560 225 565 240 545 255 530M372 710L400 690 398 675 425 665 433 650M408 742L420 710 455 715 470 705 490 712 495 700M495 625L540 620V640L500 650 495 665 530 650M500 640L520 690M515 620L525 700M485 660L540 655 565 680M510 660V710M490 640L550 690M480 650L500 690M520 700L550 690 545 720 525 720M500 690L540 670M495 705L535 720V742M535 690L555 690 540 705M520 645L550 680M452 630L470 660M420 570L430 600M395 590L410 600 440 570M380 560L410 580M530 715L550 705 555 685"/>
        <path d="M320 470V490L330 500M345 470L350 490M300 480V500L320 500 330 490M340 520L350 530M280 500L295 515M375 480H410M380 475V490M388 470V490M398 475V490M460 600H490M500 600L520 640M470 640H500M430 540V570M445 545V575M467 555H500M450 590L480 600M290 515L300 525M510 680L545 690M500 670L550 665M520 660L540 680M515 700L530 690"/>
        <path d="M553 485L570 478 620 472M553 485Q555 495 580 488L610 490 607 525 575 530 560 540 540 532M620 485V470M628 490V470M640 470V495L655 500 668 558 665 580 690 615 692 640 702 665 688 710M625 480H640M636 480H650M668 558L700 550 710 538 733 545V483L747 478V468M565 683L610 703 650 705 688 710 735 728 750 742 752 747M735 728Q730 700 780 675"/>
        <g transform="translate(750 0)">
          <path d="M0 690L20 675 38 668 45 632H75V610H88V627L130 617 170 615 185 608 195 614 205 604 230 608V571H277V600L300 595 355 583 355 542H325V468M60 468L72 471 80 468M105 468L130 487 167 530 183 510 190 485 192 468M192 484H280V515H295V540H310V556H325V542M250 470H265V483H250ZM325 512H340V525H325M355 583L365 545 375 535 373 500 355 496V482H370V470M370 480H398V495H443V468M375 527H443V553H668M375 490L385 488 395 478M378 468V490M355 570L365 545M443 495H455V468M445 508H458V495L465 492V468M443 515H458L455 500M448 480L460 475M465 492H478L480 540 490 545V570H475V583H503V570H522V548M490 545L500 555M487 468V508H580M503 480H533V495H503ZM518 495V548M503 583V605H535V643H600L608 670 624 677V743M614 556L622 590 637 612 640 640 660 645V670L668 690 685 708V700H697V712H687V728L697 732V743"/>
          <path d="M529 337L560 363 578 415V437M529 405L545 415 560 420 578 437 600 460 625 490 645 525 658 535 668 553 692 580H697V569H711V582H724V600L750 603 775 615 797 638 862 647 880 655 918 657 920 675 940 705 970 718 997 740M578 450H607V436L650 434V463H638V493H565M578 437V480H530M548 440V510M529 430L545 445M552 443H562V463H552ZM540 490L560 495 565 490 610 522 620 515 590 500M529 415L540 412 550 425 570 432M548 463H578M533 450H550M545 490L555 505 580 512M545 518V524M560 485V508M529 445L540 455M555 420V440"/>
        </g>
        <g transform="translate(2310 0)">
          <path d="M470 54L419 122 421 160 410 178 398 200 402 215 410 240 412 265 405 285V320L413 350 417 378 432 383M428 407L420 425 410 431H397L385 438 365 447 347 458 280 535 227 620 218 720M320 458H348L355 500V512H395L390 495 397 482H413M320 458L305 483H330L333 512H382V555M333 512L337 558H405V575M352 560L356 660M280 541L285 532 300 535 310 528 335 533 380 535M280 541H382M345 515V535M338 480L348 495 345 510M345 545L365 548 380 555M400 503H418M335 527H382M330 465V480M342 458L340 480 350 500M65 585H106V598H88V605H83V600H68Z"/>
        </g>
        <!-- Voronoi cells -->
        <path d="M130 55L1276 53 1279 466H128V180Z" fill="#d4b43c"/>
        <path d="M225 57L221 101 250 133 335 170 363 57M221 101L130 167M250 133L247 222 169 246 128 178M169 246L243 466M247 222L322 466M335 170L453 345 690 57M453 345L408 466M982 57L962 466"/>
        <g fill="#ff9e17" stroke-width="2.600"><circle cx="132" cy="54" r="10.500"/><circle cx="315" cy="84" r="10.500"/><circle cx="390" cy="111" r="10.500"/><circle cx="216" cy="215" r="10.500"/><circle cx="276" cy="219" r="10.500"/><circle cx="222" cy="243" r="10.500"/><circle cx="128" cy="291" r="10.500"/><circle cx="648" cy="417" r="10.500"/><circle cx="1277" cy="465" r="10.500"/></g>
      </g>
    </svg>
  </section>

  <aside class="dock right">
    <div class="title"><span>Processing Toolbox</span><svg><use href="#float"/></svg><svg><use href="#close"/></svg></div>
    <div class="mini">
      <svg viewBox="0 0 18 18"><path d="M6 1V11M1 6H11M2.500 2.500L9.500 9.500M9.500 2.500L2.500 9.500" stroke="#d8232a" stroke-width="2.200"/><circle cx="6" cy="6" r="3" fill="#d8232a"/><circle cx="6" cy="6" r="1.200" fill="#fff"/><path d="M13.500 4.500V12.500M9.500 8.500H17.500M10.700 5.700L16.300 11.300M16.300 5.700L10.700 11.300" stroke="#777" stroke-width="1.300"/><circle cx="13.500" cy="8.500" r="2" fill="#777"/><circle cx="9" cy="14" r="3" fill="#9bb8de"/><path d="M12.500 15H18L15.200 18Z" fill="#444"/></svg>
      <svg viewBox="0 0 18 18"><use href="#python" width="16" height="16"/><path d="M12.500 15H18L15.200 18Z" fill="#444"/></svg>
      <svg><use href="#clock"/></svg>
      <svg viewBox="0 0 16 16"><path d="M2.500 1H10L13.500 4.500V15H2.500Z" fill="#f8f8f8" stroke="#999"/><path d="M10 1V4.500H13.500M4.500 5H8M4.500 7.500H11.500M4.500 10H11.500M4.500 12.500H11.500" fill="none" stroke="#999"/></svg>
      <i class="vsep"></i>
      <svg viewBox="0 0 16 16"><path d="M1 1.500H11V10.500H8L6 12 5.500 10.500H1Z" fill="#fce94f" stroke="#c4a000"/><path d="M8 14L9 11 13 4.500 15 6 11 12.500Z" fill="#f0d66c" stroke="#9a8540" stroke-width=".7"/></svg>
      <i class="vsep"></i>
      <svg><use href="#wrench"/></svg>
    </div>
    <div class="field search"><svg><use href="#find"/></svg>Search…</div>
    <div class="tree tools">
      <div class="row"><svg><use href="#clock"/></svg>Recently used</div>
      <div class="row"><svg><use href="#q"/></svg>Cartography</div>
      <div class="row"><svg><use href="#q"/></svg>Database</div>
      <div class="row"><svg><use href="#q"/></svg>File tools</div>
      <div class="row"><svg><use href="#q"/></svg>Graphics</div>
      <div class="row"><svg><use href="#q"/></svg>Interpolation</div>
      <div class="row"><svg><use href="#q"/></svg>Layer tools</div>
      <div class="row"><svg><use href="#q"/></svg>Network analysis</div>
      <div class="row"><svg><use href="#q"/></svg>Raster analysis</div>
      <div class="row"><svg><use href="#q"/></svg>Raster terrain analysis</div>
      <div class="row"><svg><use href="#q"/></svg>Raster tools</div>
      <div class="row"><svg><use href="#q"/></svg>Vector analysis</div>
      <div class="row"><svg><use href="#q"/></svg>Vector creation</div>
      <div class="row"><svg><use href="#q"/></svg>Vector general</div>
      <div class="row"><svg><use href="#q"/></svg>Vector geometry</div>
      <div class="row"><svg><use href="#q"/></svg>Vector overlay</div>
      <div class="row"><svg><use href="#q"/></svg>Vector selection</div>
      <div class="row"><svg><use href="#q"/></svg>Vector table</div>
      <div class="row"><svg viewBox="0 0 16 16"><circle cx="10" cy="6" r="5" fill="#8fc8d8" stroke="#3c7a58" stroke-width=".8"/><path d="M7 2L10 5 13 3 14 8 11 9Z" fill="#4e9a5b"/><text x="0" y="14" font-family="Noto Sans" font-weight="bold" font-size="7" textLength="15" fill="#111">GDAL</text></svg>GDAL</div>
      <div class="row"><svg viewBox="0 0 16 16"><path d="M8 .5L14.500 7.500 8 15.500 1.500 7.500Z" fill="#f4fbf4" stroke="#5f8f6f" stroke-width=".9"/><path d="M8 4V14M8 14L5 8M8 14L11 8M8 13L6 11.500 3 11M8 13L10 11.500H13" fill="none" stroke="#2f9a2f" stroke-width=".8"/></svg>GRASS</div>
    </div>
  </aside>
</main>

<footer class="status">
  <div class="field locate"><svg><use href="#find"/></svg>Type to locate (Ctrl+K)</div>
  <span class="s-coord">Coordinate</span><div class="field f-coord">759250,3867947</div>
  <svg class="mouse" viewBox="0 0 16 16"><path d="M1 2L5 1 12 8 14 13 9 15 4 9Z" fill="#ddd" stroke="#222"/><path d="M1 8L14 2M2 12L12 5M5 3L13 13" stroke="#222"/></svg>
  <span class="s-scale">Scale</span><div class="field f-scale">1:1230272<i class="drop"></i></div>
  <svg class="lock" viewBox="0 0 14 16"><path d="M3.500 8V4.500C3.500 .5 10.500 .5 10.500 4.500V8" fill="none" stroke="#777" stroke-width="1.500"/><rect x="1" y="7" width="12" height="8.500" rx="1" fill="#555"/></svg>
  <span class="s-mag">Magnifier</span><div class="field spin f-mag">100%<i><b></b><b></b></i></div>
  <span class="s-rot">Rotation</span><div class="field spin f-rot">0.0 °<i><b></b><b></b></i></div>
  <i class="check"><svg viewBox="0 0 12 12"><path d="M2.500 5.500L5 9.500 9.500 2" fill="none" stroke="#000" stroke-width="2"/></svg></i><span class="s-render">Render</span>
  <svg class="crs" viewBox="0 0 16 16"><path d="M8 .5L15.500 8 8 15.500 .5 8Z" fill="#999"/><circle cx="8" cy="8" r="6" fill="#aaa" stroke="#666"/><path d="M1 8H15M8 1V15M3 4.500H13M3 11.500H13" stroke="#555"/><ellipse cx="8" cy="8" rx="3.500" ry="6" fill="none" stroke="#555"/></svg>
  <span class="s-epsg">EPSG:26911</span>
  <svg class="msg" viewBox="0 0 16 16"><path d="M8 1.500C12 1.500 15.500 4 15.500 7.500S13 13 11.500 13.200L12 15.500 8.500 13.500C4 13.500 .5 11 .5 7.500S4 1.500 8 1.500Z" fill="#555"/><g fill="#fff"><circle cx="4.800" cy="7.500" r="1.100"/><circle cx="8" cy="7.500" r="1.100"/><circle cx="11.200" cy="7.500" r="1.100"/></g></svg>
</footer>
</body>
</html>
```
FILE: styles.css
```css
* { box-sizing: border-box; }
body {
  margin: 0;
  width: 1850px;
  height: 1017px;
  overflow: hidden;
  background: #efefef;
  border-top: 1px solid #1d1b1d;
  color: #000;
  font: 14.2px/19px "Noto Sans", sans-serif;
  letter-spacing: .09px;
  display: flex;
  flex-direction: column;
}
i { font-style: normal; }
.defs { position: absolute; }

.menubar {
  flex: none;
  height: 22px;
  padding-left: 10px;
  border-bottom: 1px solid #d0d0d0;
  display: flex;
  line-height: 21px;
  letter-spacing: .15px;
  white-space: nowrap;
}
.menubar u { text-decoration: underline; text-decoration-thickness: 1.500px; text-underline-offset: 2px; text-decoration-skip-ink: none; }
.m1 { width: 63px; } .m2 { width: 41px; } .m3 { width: 48px; } .m4 { width: 51px; }
.m5 { width: 71px; } .m6 { width: 64px; } .m7 { width: 59px; } .m8 { width: 57px; }
.m9 { width: 79px; } .m10 { width: 46px; } .m11 { width: 87px; }

.toolbar {
  flex: none;
  height: 39px;
  display: flex;
  align-items: center;
  border-bottom: 1px solid #b4b4b4;
  background: linear-gradient(#f8f8f8, #ececec);
}
.toolbar.last { height: 38px; }
.tool {
  flex: none;
  width: 33px;
  height: 32px;
  padding: 4px 4px 4px 5px;
}
.tool svg { display: block; width: 24px; height: 24px; overflow: visible; }
.tool.on { width: 32px; margin-right: 1px; background: #dadada; border-radius: 3px; box-shadow: inset 0 0 0 1px #a8a8a8; }
.tool.off svg { filter: grayscale(.65); opacity: .33; }
.abc { font: bold 8.500px "Noto Sans", sans-serif; letter-spacing: 0; fill: #333; }
.grip {
  flex: none;
  width: 16px;
  height: 18px;
  background: radial-gradient(circle, #a9a9a9 0 .8px, transparent 1px) 7px 0 / 3px 3px;
  background-clip: content-box;
  padding: 0 4px 0 8px;
}
.grip.first { width: 12px; padding: 0 3px 0 4px; background-position-x: 4px; }
.drop {
  flex: none;
  width: 12px;
  height: 5px;
  background: #555;
  clip-path: polygon(1px 0, 9px 0, 5px 5px);
}
.toolbar .drop { clip-path: polygon(2px 0, 10px 0, 6px 5px); }
.drop.off { background: #c4c4c4; }

.main { flex: none; height: 847px; display: flex; gap: 6px; }
.dock { display: flex; flex-direction: column; }
.left { width: 193px; }
.right { width: 469px; }
.canvas { width: 1176px; height: 846px; margin-top: 1px; border: 1px solid #b4b4b4; background: #fff; }
.canvas svg { display: block; }

.title { flex: none; height: 25px; padding: 1px 2px 0 4px; display: flex; gap: 2px; align-items: flex-start; }
.title span { flex: 1; line-height: 20px; letter-spacing: .2px; }
.title svg { width: 12px; height: 12px; margin-top: 4px; }
.mini { flex: none; height: 26px; padding: 2px 0 0 8px; display: flex; gap: 9px; }
.mini svg { flex: none; width: 16px; height: 16px; }
.mini .drop { margin: 6px 0 0 -4px; width: 9px; }
.mini .expand { margin-left: -1px; }
.mini .more { margin: -3px 0 0 9px; font-size: 16px; color: #333; }
.vsep { width: 1px; height: 12px; margin: 2px -1px 0; background: #ccc; }
.splitter { flex: none; height: 5px; background: radial-gradient(circle, #a5a5a5 0 .8px, transparent 1px) 0 1px / 3px 3px repeat-x; margin: 0 87px 0 89px; }

.tree { border: 1px solid #b4b4b4; background: #fff; overflow: hidden; }
.browser { flex: none; height: 376px; }
.layers { flex: 1; }
.tools { flex: 1; }
.row { height: 19px; display: flex; align-items: center; padding-left: 8px; white-space: nowrap; }
.row::before { content: ""; width: 5px; height: 8px; margin-right: 10px; background: #555; clip-path: polygon(0 0, 4px 4px, 0 8px); }
.row.leaf::before { background: none; }
.row svg { flex: none; width: 16px; height: 16px; margin-right: 6px; }
.wide { letter-spacing: .22px; }

.lrow { height: 19px; display: flex; align-items: center; padding-left: 23px; white-space: nowrap; font-weight: bold; letter-spacing: .25px; position: relative; }
.lrow span { width: 125px; overflow: hidden; height: 19px; line-height: 19px; }
.lrow > svg { position: absolute; right: 1px; top: 3px; width: 17px; height: 13px; }
.check { flex: none; width: 14px; height: 14px; border: 1px solid #a8a8a8; background: #fff; }
.check svg { display: block; width: 12px; height: 12px; }
.swatch { flex: none; width: 16px; height: 16px; margin: 0 6px 0 6px; border: 1px solid #444; }
.rose { background: #f4a6b4; border-color: #8a6068; }
.grey { background: #837a7c; }
.gold { background: #d4b43c; }
.pink { background: #e15989; }
.dot { width: 7px; height: 7px; margin: 0 11px 0 10px; border-radius: 50%; background: #ff9e17; border: 1px solid #8a5a20; }
.hidden { font-style: italic; color: #b9b9b9; }
.hidden span, .selected span { padding-left: 1px; }
.selected { background: #308cc6; color: #fff; font-style: italic; text-decoration: underline; letter-spacing: .1px; }

.field {
  display: flex;
  align-items: center;
  background: #fff;
  border: 1px solid #a8a8a8;
  border-radius: 3px;
}
.field svg { width: 14px; height: 14px; }
.search { flex: none; height: 25px; padding-left: 7px; gap: 7px; color: #808080; }
.locate { width: 273px; height: 25px; margin: 3px 0 0 4px; padding-left: 8px; gap: 7px; color: #808080; font-size: 14.2px; letter-spacing: .09px; }

.status { flex: 1; display: flex; align-items: flex-start; font-size: 12.800px; letter-spacing: -.42px; }
.status > span { line-height: 31px; white-space: nowrap; }
.status > svg { width: 16px; height: 16px; margin-top: 8px; }
.s-coord { margin-left: 689px; width: 64px; }
.f-coord { width: 100px; height: 24px; margin-top: 4px; padding-left: 3px; letter-spacing: -.6px; }
.status .mouse { margin-left: 5px; }
.s-scale { margin-left: 13px; width: 32px; }
.f-scale { width: 97px; height: 24px; margin-top: 4px; padding-left: 4px; position: relative; letter-spacing: -.5px; }
.f-scale .drop { margin-left: auto; margin-right: 3px; }
.f-scale::after { content: ""; position: absolute; right: 19px; top: 0; bottom: 0; border-left: 1px solid #b8b8b8; }
.status .lock { width: 13px; margin-left: 11px; }
.s-mag { margin-left: 9px; width: 56px; }
.spin { height: 24px; margin-top: 4px; padding-left: 4px; }
.f-mag { width: 98px; }
.f-rot { width: 94px; }
.spin i { margin-left: auto; width: 14px; height: 100%; border-left: 1px solid #b8b8b8; display: flex; flex-direction: column; gap: 5px; align-items: center; justify-content: center; }
.spin b { width: 6px; height: 4px; background: #555; clip-path: polygon(0 100%, 50% 0, 100% 100%); }
.spin b + b { clip-path: polygon(0 0, 100% 0, 50% 100%); }
.s-rot { margin-left: 10px; width: 56px; }
.status .check { margin: 9px 5px 0 6px; }
.s-render { width: 55px; }
.s-epsg { margin-left: 2px; width: 87px; letter-spacing: -.5px; }
.status .msg { width: 18px; height: 18px; margin-top: 7px; }
```
